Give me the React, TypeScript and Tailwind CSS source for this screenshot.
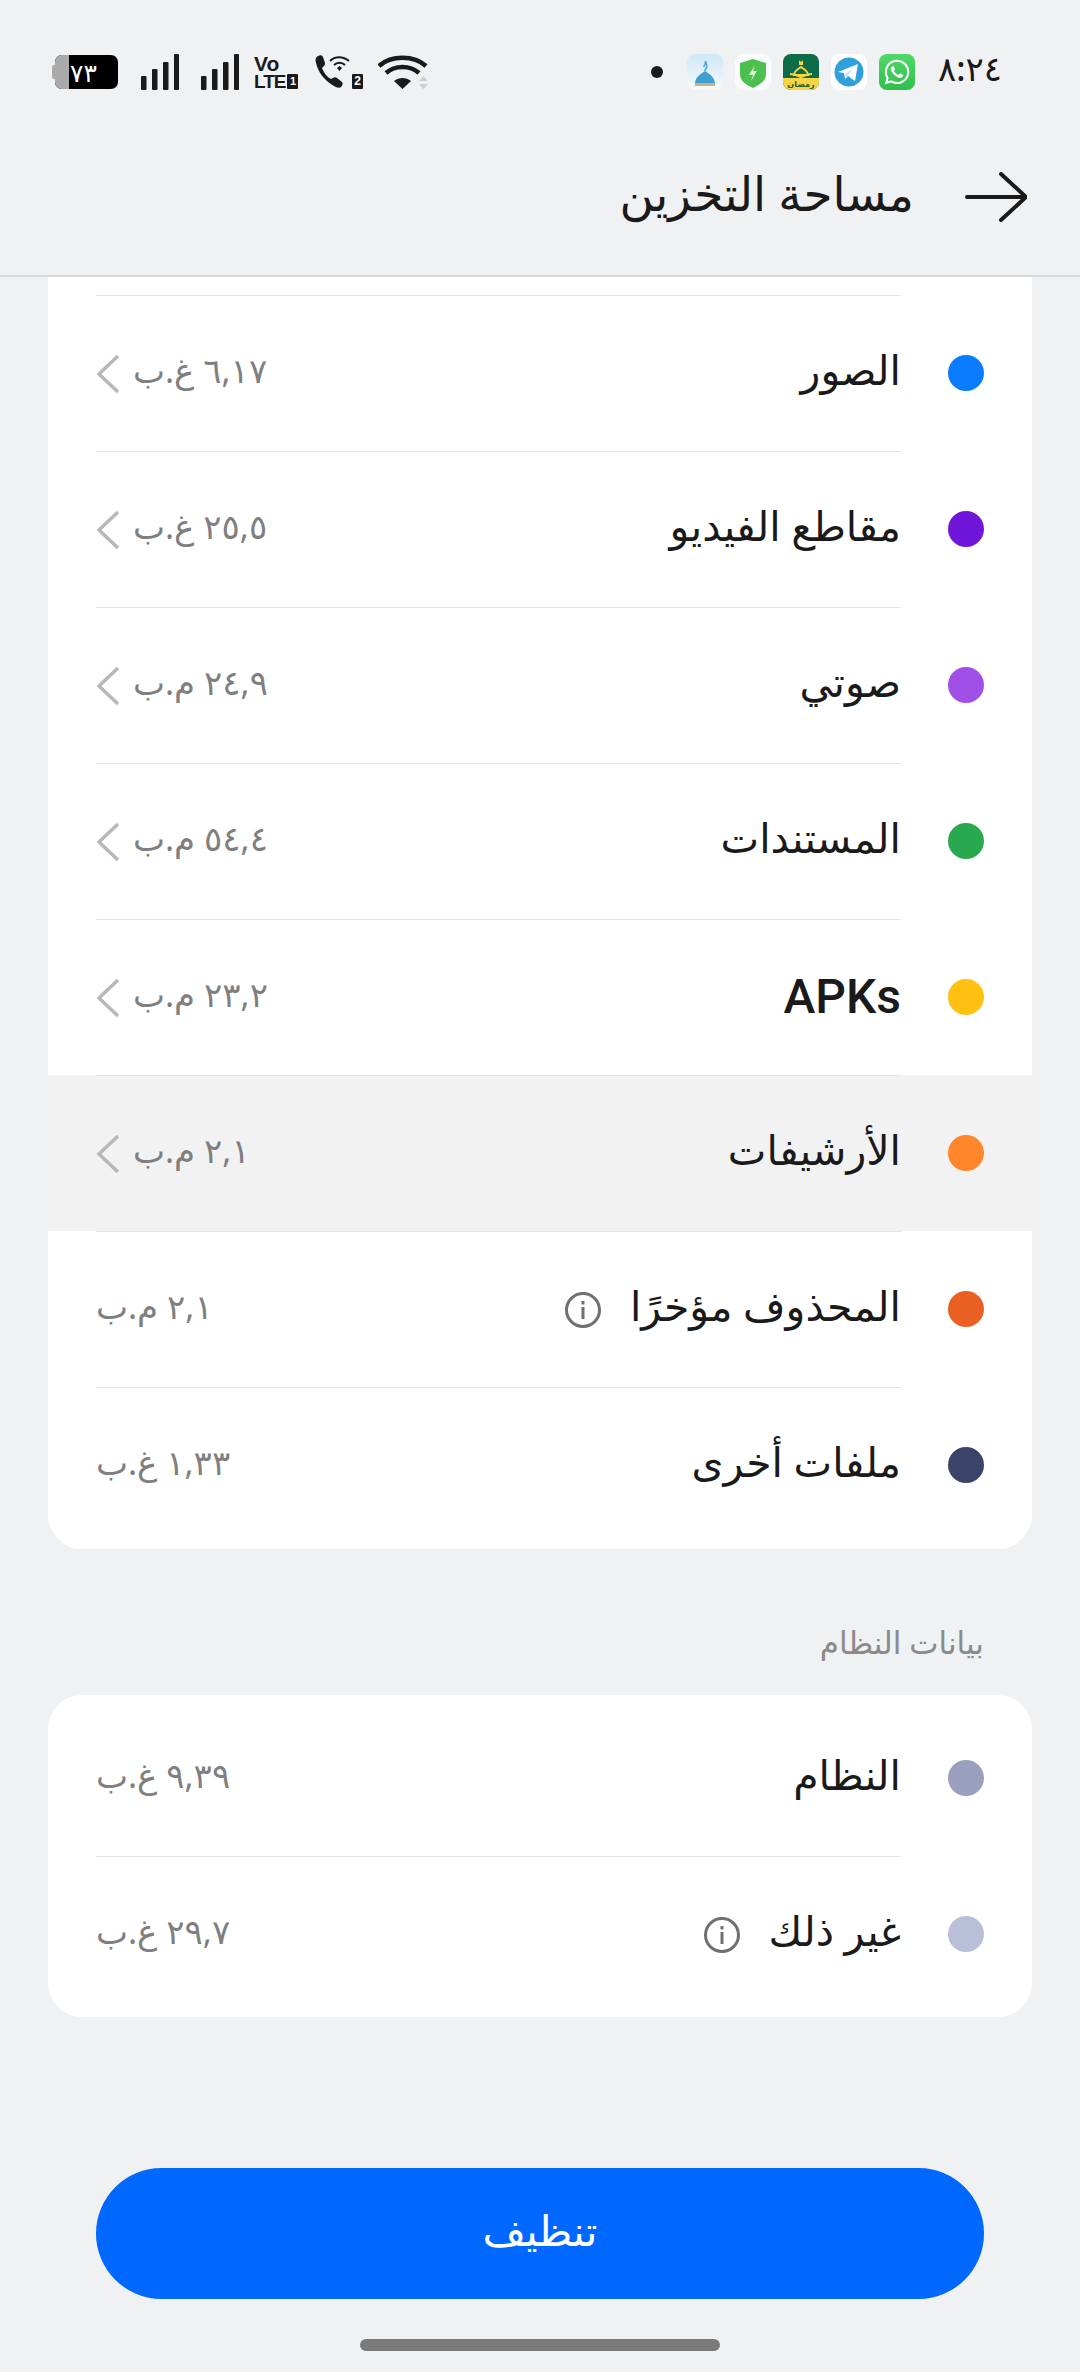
import { FaWhatsapp } from "react-icons/fa";

interface RowData {
  label: string;
  value: string;
  color: string;
  chevron?: boolean;
  info?: boolean;
  active?: boolean;
  latin?: boolean;
}

const mediaRows: RowData[] = [
  { label: "الصور", value: "٦,١٧ غ.ب", color: "#0a7cff", chevron: true },
  { label: "مقاطع الفيديو", value: "٢٥,٥ غ.ب", color: "#6f16d9", chevron: true },
  { label: "صوتي", value: "٢٤,٩ م.ب", color: "#a050e6", chevron: true },
  { label: "المستندات", value: "٥٤,٤ م.ب", color: "#28a84f", chevron: true },
  { label: "APKs", value: "٢٣,٢ م.ب", color: "#ffc012", chevron: true, latin: true },
  { label: "الأرشيفات", value: "٢,١ م.ب", color: "#ff862b", chevron: true, active: true },
  { label: "المحذوف مؤخرًا", value: "٢,١ م.ب", color: "#e96022", info: true },
  { label: "ملفات أخرى", value: "١,٣٣ غ.ب", color: "#3b4468" },
];

const systemRows: RowData[] = [
  { label: "النظام", value: "٩,٣٩ غ.ب", color: "#9ba0bf" },
  { label: "غير ذلك", value: "٢٩,٧ غ.ب", color: "#b9bfd9", info: true },
];

function Bars() {
  return (
    <svg width="38" height="36" viewBox="0 0 38 36" fill="#1a1a1a">
      <rect x="0" y="22" width="5.500" height="14" rx="1" />
      <rect x="11" y="15" width="5.500" height="21" rx="1" />
      <rect x="22" y="8" width="5.500" height="28" rx="1" />
      <rect x="33" y="0" width="5" height="36" rx="1" />
    </svg>
  );
}

function StatusBar() {
  return (
    <div dir="ltr" className="flex h-[90px] items-end pl-[52px] pr-[77px]">
      <div className="flex h-[36px] items-center">
        <div className="relative flex h-[34px] w-[66px] items-center pl-[3px]">
          <span className="absolute top-[10px] left-0 h-[14px] w-[4px] rounded-l-[2px] bg-[#aaaaaa]" />
          <div className="flex h-[34px] w-[63px] overflow-hidden rounded-[7px] bg-black">
            <div className="h-full w-[14px] shrink-0 bg-[#aaaaaa]" />
            <span className="pl-px text-[25px] leading-[34px] font-medium whitespace-nowrap text-white">٧٣</span>
          </div>
        </div>
        <div className="ml-[23px]"><Bars /></div>
        <div className="ml-[22px]"><Bars /></div>
        <div className="ml-[15px] flex w-[46px] flex-col font-bold text-[#1a1a1a] [font-family:'Liberation_Sans',sans-serif]">
          <span className="text-[21px] leading-[19px]">Vo</span>
          <span className="flex items-center text-[19px] leading-[17px] tracking-[-1px]">
            LTE
            <span className="ml-[2px] h-[15px] w-[11px] rounded-[1px] bg-[#1a1a1a] text-center text-[11px] leading-[15px] tracking-normal text-white">1</span>
          </span>
        </div>
        <div className="relative ml-[15px] h-[36px] w-[48px]">
          <svg width="48" height="36" viewBox="0 0 48 36" fill="none">
            <path d="M3 2c-2 1-3 3-2 7 2 9 8 17 18 23 3 2 6 2 7 1 2-2 2-4 1-5l-5-4c-1-1-3-1-4 0l-2 1c-4-2-7-6-9-11l2-2c1-1 1-2 1-3L8 3C7 1 5 1 3 2z" fill="#1a1a1a" />
            <path d="M15 7c5-5 13-5 19 0M19 11c3-3 8-3 11 0" stroke="#1a1a1a" strokeWidth="2" />
            <path d="M22 14l2.500-2 2.500 2-2.500 3z" fill="#1a1a1a" />
          </svg>
          <span className="absolute right-0 bottom-[1px] h-[15px] w-[11px] rounded-[1px] bg-[#1a1a1a] text-center text-[12px] leading-[15px] font-bold text-white [font-family:'Liberation_Sans',sans-serif]">2</span>
        </div>
        <svg className="ml-[15px]" width="51" height="36" viewBox="0 0 51 36" fill="none">
          <path d="M1 12C13 1 36 1 48 12" stroke="#1a1a1a" strokeWidth="4.500" />
          <path d="M8 19c9-8 24-8 33 0" stroke="#1a1a1a" strokeWidth="4.500" />
          <path d="M16 27c5-4 12-4 17 0l-8.500 8z" fill="#1a1a1a" />
          <path d="M41 27l4.500-5 4.500 5zM41 30h9l-4.500 5z" fill="#cfcfcf" />
        </svg>
      </div>
      <div className="ml-auto flex h-[36px] items-center">
        <span className="mr-[24px] h-[12px] w-[12px] rounded-full bg-[#1a1a1a]" />
        <div className="flex gap-[12px]">
          <div className="h-[36px] w-[36px] overflow-hidden rounded-[8px] bg-gradient-to-b from-[#cfe7f7] to-[#f6f9fb]">
            <svg width="36" height="36" viewBox="0 0 36 36">
              <path d="M8 29c1-7 6-9 10-12 4 3 9 5 10 12z" fill="#3f9fd0" />
              <rect x="8" y="29" width="20" height="3" fill="#c7b47c" />
              <path d="M17.500 17c3-3 3-6 1-10 0 3-1 5-2 6" fill="none" stroke="#4fa6d6" strokeWidth="1.500" />
            </svg>
          </div>
          <div className="h-[36px] w-[36px] rounded-[8px] bg-white/70">
            <svg width="36" height="36" viewBox="0 0 36 36">
              <path d="M18 5l13 4v11c0 7-6 11-13 14C11 31 5 27 5 20V9z" fill="#4cc04f" />
              <path d="M20 11l-6 10h4l-2 6 6-10h-4z" fill="#d7f5d4" />
            </svg>
          </div>
          <div className="relative h-[36px] w-[36px] overflow-hidden rounded-[8px] bg-[#0e6b47]">
            <svg width="36" height="36" viewBox="0 0 36 36">
              <rect y="24" width="36" height="12" fill="#f6d545" />
              <path d="M11 21c0-4 4-6 7-8 3 2 7 4 7 8z" fill="none" stroke="#f6d545" strokeWidth="2" />
              <path d="M7 20c6 0 9 3 11 3s5-3 11-3" fill="none" stroke="#f6d545" strokeWidth="2" />
              <path d="M16 6c1 2 3 2 4 0v5h-4z" fill="#f6d545" />
            </svg>
            <span className="absolute inset-x-0 bottom-[1px] text-center text-[8px] leading-[10px] font-bold text-[#2f5a2a]">رمضان</span>
          </div>
          <div className="h-[36px] w-[36px] rounded-[8px] bg-white">
            <svg width="36" height="36" viewBox="0 0 36 36">
              <circle cx="18" cy="18" r="14.500" fill="#2fa0dc" />
              <path d="M7 18l20-8-3 17-7-5-3 3-1-6z" fill="#ffffff" />
              <path d="M13 21l9-7-6 9z" fill="#c4e0f2" />
            </svg>
          </div>
          <div className="flex h-[36px] w-[36px] items-center justify-center rounded-[8px] bg-gradient-to-b from-[#4fd968] to-[#2fbf4c]">
            <FaWhatsapp size={28} color="#ffffff" />
          </div>
        </div>
        <span className="ml-[23px] w-[65px] pb-[8px] text-[34px] leading-[36px] font-medium whitespace-nowrap text-[#1a1a1a]">٨:٢٤</span>
      </div>
    </div>
  );
}

function Row({ row, noBorder }: { row: RowData; noBorder?: boolean }) {
  return (
    <div className={`flex h-[156px] pr-[48px] ${row.active ? "bg-[#f2f2f2]" : ""}`}>
      <div className="flex w-[36px] shrink-0 items-center">
        <span className="h-[36px] w-[36px] rounded-full" style={{ backgroundColor: row.color }} />
      </div>
      <div className={`mr-[47px] ml-[48px] flex flex-1 items-center justify-between ${noBorder ? "pt-px" : "border-t border-[#e3e4e6]"}`}>
        <div className="flex items-center gap-[28px]">
          <span
            className={`text-[#1a1a1a] ${row.latin ? "pt-[4px] pb-[6px] text-[48px] font-medium [font-family:'Roboto',sans-serif]" : "pb-[8px] text-[41px]"}`}
          >
            {row.label}
          </span>
          {row.info && (
            <svg width="38" height="38" viewBox="0 0 38 38" fill="none">
              <circle cx="19" cy="19" r="16.500" stroke="#707070" strokeWidth="3" />
              <rect x="17.500" y="16" width="3" height="12" fill="#707070" />
              <rect x="17.500" y="10" width="3" height="3.500" fill="#707070" />
            </svg>
          )}
        </div>
        <div className="flex items-center gap-[13px]">
          <span className="pb-[6px] text-[34px] text-[#7f7f7f]">{row.value}</span>
          {row.chevron && (
            <svg width="24" height="40" viewBox="0 0 24 40" fill="none">
              <path d="M22 2L3 20l19 18" stroke="#b8b8b8" strokeWidth="3.500" />
            </svg>
          )}
        </div>
      </div>
    </div>
  );
}

export default function App() {
  return (
    <div dir="rtl" className="flex h-[2372px] w-[1080px] flex-col overflow-hidden bg-[#eff1f3] [font-family:'Noto_Sans','DejaVu_Sans',sans-serif]">
      <StatusBar />
      <div className="flex h-[187px] items-center gap-[51px] border-b-2 border-[#d6d8da] pt-[28px] pr-[53px]">
        <svg width="62" height="50" viewBox="0 0 62 50" fill="none">
          <path d="M60 25H2M36 2l25 23-25 23" stroke="#1a1a1a" strokeWidth="4" strokeLinecap="round" strokeLinejoin="round" />
        </svg>
        <span className="pb-[6px] text-[47px] text-[#1a1a1a]">مساحة التخزين</span>
      </div>

      <div className="mx-[48px] overflow-hidden rounded-b-[34px] bg-white pt-[18px] pb-[6px]">
        {mediaRows.map((row) => (
          <Row key={row.label} row={row} />
        ))}
      </div>

      <div className="flex h-[146px] items-center pt-[50px] pr-[96px] pb-[10px] text-[31px] text-[#8a8a8a]">بيانات النظام</div>

      <div className="mx-[48px] overflow-hidden rounded-[34px] bg-white py-[5px]">
        {systemRows.map((row, i) => (
          <Row key={row.label} row={row} noBorder={i === 0} />
        ))}
      </div>

      <div className="mx-[96px] mt-[151px] flex h-[131px] items-center justify-center rounded-full bg-[#0068ff] pb-[8px] text-[42px] text-white">
        تنظيف
      </div>
      <div className="mx-auto mt-[40px] h-[12px] w-[360px] rounded-full bg-[#7a7a7a]" />
    </div>
  );
}
